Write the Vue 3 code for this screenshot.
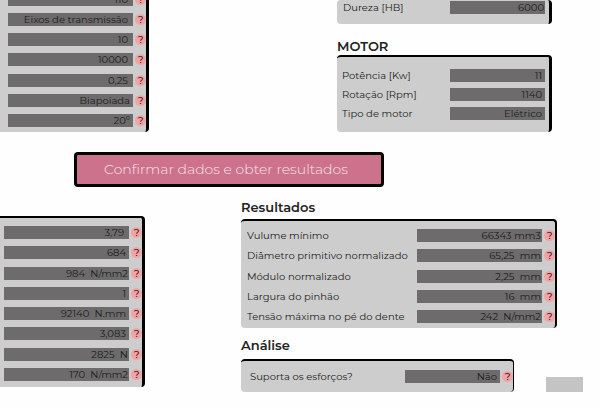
<script setup>
import { reactive } from 'vue'

const inputs = reactive([
  { name: 'Vida útil', value: '110', end: 'wide' },
  { name: 'Aplicação', value: 'Eixos de transmissão', end: 'wide' },
  { name: 'Horas por dia', value: '10', end: 'wide' },
  { name: 'Duração', value: '10000', end: 'wide' },
  { name: 'Relação', value: '0,25', end: 'wide' },
  { name: 'Montagem', value: 'Biapoiada', end: 'near' },
  { name: 'Ângulo de pressão', value: '20º', end: 'near' },
])

const motor = reactive([
  { id: 'potencia', label: 'Potência [Kw]', value: '11' },
  { id: 'rotacao', label: 'Rotação [Rpm]', value: '1140' },
  { id: 'tipo', label: 'Tipo de motor', value: 'Elétrico' },
])

const computedValues = [
  { name: 'Fator 1', value: '3,79', end: 'wide' },
  { name: 'Fator 2', value: '684', end: 'near' },
  { name: 'Pressão', value: '984  N/mm2', end: 'flush' },
  { name: 'Fator 3', value: '1', end: 'near' },
  { name: 'Momento', value: '92140  N.mm', end: 'near' },
  { name: 'Fator 4', value: '3,083', end: 'near' },
  { name: 'Força', value: '2825  N', end: 'flush' },
  { name: 'Tensão', value: '170  N/mm2', end: 'flush' },
]

const results = [
  { id: 'volume', label: 'Vulume mínimo', value: '66343 mm3' },
  { id: 'diametro', label: 'Diâmetro primitivo normalizado', value: '65,25  mm' },
  { id: 'modulo', label: 'Módulo normalizado', value: '2,25  mm' },
  { id: 'largura', label: 'Largura do pinhão', value: '16  mm' },
  { id: 'tensao', label: 'Tensão máxima no pé do dente', value: '242  N/mm2' },
]
</script>

<template>
  <main class="page">
    <div class="top">
      <section class="panel inputs">
        <div v-for="f in inputs" :key="f.name" class="row">
          <input v-model="f.value" class="field" :class="f.end" :aria-label="f.name" />
          <button type="button" class="help">?</button>
        </div>
      </section>

      <div class="column">
        <section class="panel material">
          <div class="row">
            <label for="dureza">Dureza [HB]</label>
            <input id="dureza" class="field short flush" value="6000" />
          </div>
        </section>
        <h2>MOTOR</h2>
        <section class="panel motor">
          <div v-for="f in motor" :key="f.id" class="row">
            <label :for="f.id">{{ f.label }}</label>
            <input :id="f.id" v-model="f.value" class="field short near" />
          </div>
        </section>
      </div>
    </div>

    <button type="button" class="confirm">Confirmar dados e obter resultados</button>

    <div class="bottom">
      <section class="panel computed">
        <div v-for="f in computedValues" :key="f.name" class="row">
          <input class="field" :class="f.end" :value="f.value" :aria-label="f.name" readonly />
          <button type="button" class="help">?</button>
        </div>
      </section>

      <div class="column">
        <h2>Resultados</h2>
        <section class="panel results">
          <div v-for="f in results" :key="f.id" class="row">
            <label :for="f.id">{{ f.label }}</label>
            <input :id="f.id" class="field flush" :value="f.value" readonly />
            <button type="button" class="help">?</button>
          </div>
        </section>
        <h2 class="spaced">Análise</h2>
        <div class="analysis-row">
          <section class="panel analysis">
            <div class="row">
              <label for="suporta">Suporta os esforços?</label>
              <input id="suporta" class="field short near" value="Não" readonly />
              <button type="button" class="help">?</button>
            </div>
          </section>
          <div class="block"></div>
        </div>
      </div>
    </div>
  </main>
</template>

<style>
body {
  background: #fefefe;
}
</style>

<style scoped>
.page {
  font-family: Montserrat, Inter, "Open Sans", sans-serif;
  font-size: 10px;
  color: #222;
  overflow: hidden;
}
.page * {
  box-sizing: border-box;
}
.top {
  display: grid;
  grid-template-columns: minmax(0, 149fr) minmax(0, 215fr);
  gap: 188px;
  padding-right: 48px;
}
.bottom {
  display: grid;
  grid-template-columns: minmax(0, 145fr) minmax(0, 342fr);
  gap: 96px;
  align-items: start;
  padding: 12px 17px 16px 0;
}
.panel {
  display: flex;
  flex-direction: column;
  justify-content: space-between;
  gap: 7px;
  background: #cdcdcd;
  border: solid #000;
  border-width: 2px 3px 0 0;
  border-radius: 4px;
}
.row {
  display: flex;
  align-items: center;
  height: 13px;
}
label {
  flex: 1;
  line-height: 13px;
  white-space: nowrap;
}
.field {
  width: 125px;
  height: 13px;
  padding: 0;
  border: 0;
  border-radius: 0;
  background: #6d6b6c;
  color: #1c1c1c;
  font: inherit;
  line-height: 13px;
  text-align: right;
  outline-offset: 1px;
}
.short {
  width: 95px;
}
.flush {
  padding-right: 1px;
}
.near {
  padding-right: 3px;
}
.wide {
  padding-right: 5px;
}
.help {
  flex: none;
  width: 11px;
  height: 11px;
  margin-left: 2px;
  padding: 0;
  border: 0;
  border-radius: 50%;
  background: #f2a3a5;
  color: #3a2226;
  font: inherit;
  font-weight: 500;
  line-height: 11px;
  text-align: center;
}
h2 {
  margin: 0;
  font-size: 13px;
  font-weight: 600;
  line-height: 17px;
  color: #222;
}
.inputs {
  margin-top: -9px;
  padding: 0 0 5px 8px;
  border-radius: 0 4px 4px 0;
}
.material {
  margin-bottom: 14px;
  padding: 1px 4px 10px 6px;
  border-top: 0;
}
.motor {
  gap: 6px;
  padding: 12px 4px 12px 5px;
}
.confirm {
  display: block;
  width: 310px;
  height: 35px;
  margin: 20px 0 0 74px;
  padding: 0 6px 2px 0;
  border: 3px solid #000;
  border-radius: 4px;
  background: #cc728c;
  color: #f8e4ea;
  font: inherit;
  font-size: 14px;
  font-weight: 300;
}
.computed {
  min-height: 171px;
  margin-top: 17px;
  padding: 8px 0 6px 4px;
  border-radius: 0 4px 4px 0;
}
.results {
  min-height: 109px;
  margin: 3px 26px 0 0;
  padding: 8px 0 5px 6px;
  border-right-width: 2px;
}
.spaced {
  margin-top: 9px;
}
.analysis-row {
  display: flex;
  align-items: flex-end;
  gap: 32px;
  margin-top: 5px;
}
.analysis {
  flex: 1;
  padding: 9px 0 9px 9px;
  border-right-width: 1px;
}
.block {
  width: 37px;
  height: 15px;
  background: #c4c4c4;
}
</style>
